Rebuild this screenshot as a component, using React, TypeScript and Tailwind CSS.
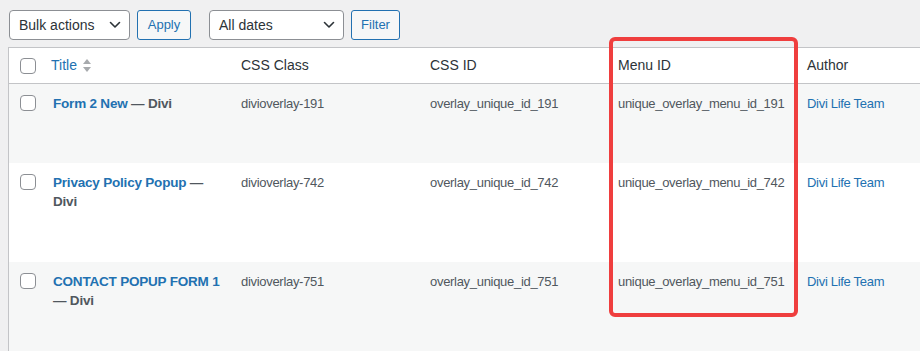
import React from "react";

// Row type
interface Overlay {
  titleLines: { link: string; state: string }[];
  cssClass: string;
  cssId: string;
  menuId: string;
  author: string;
  height: string;
  bg: string;
}

const ROWS: Overlay[] = [
  {
    titleLines: [{ link: "Form 2 New", state: " — Divi" }],
    cssClass: "divioverlay-191", cssId: "overlay_unique_id_191", menuId: "unique_overlay_menu_id_191",
    author: "Divi Life Team", height: "h-[79px]", bg: "bg-[#f6f7f7]",
  },
  {
    titleLines: [{ link: "Privacy Policy Popup", state: " —" }, { link: "", state: "Divi" }],
    cssClass: "divioverlay-742", cssId: "overlay_unique_id_742", menuId: "unique_overlay_menu_id_742",
    author: "Divi Life Team", height: "h-[99px]", bg: "bg-white",
  },
  {
    titleLines: [{ link: "CONTACT POPUP FORM 1", state: "" }, { link: "", state: "— Divi" }],
    cssClass: "divioverlay-751", cssId: "overlay_unique_id_751", menuId: "unique_overlay_menu_id_751",
    author: "Divi Life Team", height: "h-[100px]", bg: "bg-[#f6f7f7]",
  },
];

function Chevron() {
  return (
    <svg width="12" height="8" viewBox="0 0 12 8" fill="none">
      <polyline points="1.5,1.5 6,6 10.5,1.5" stroke="#2c3338" strokeWidth="1.6" strokeLinecap="round" strokeLinejoin="round" />
    </svg>
  );
}

function Checkbox() {
  return <div className="w-4 h-4 rounded-[4px] border border-[#8c8f94] bg-white" />;
}

export default function App() {
  return (
    <div className="relative w-[920px] h-[351px] overflow-hidden bg-[#f0f0f1] font-['Liberation_Sans',Arial,sans-serif] text-[#2c3338]">
      {/* Toolbar */}
      <div className="flex items-center pt-[10px] pl-[9px] h-[40px]">
        <div className="flex items-center justify-between w-[121px] h-[30px] pl-[9px] pr-[8px] bg-white border border-[#8c8f94] rounded-[4px] text-[14px]">
          <span>Bulk actions</span>
          <Chevron />
        </div>
        <button className="ml-[7px] w-[54px] h-[30px] border border-[#2271b1] rounded-[3px] bg-[#f6f7f7] text-[13px] text-[#2271b1]">Apply</button>
        <div className="ml-[18px] flex items-center justify-between w-[135px] h-[30px] pl-[9px] pr-[8px] bg-white border border-[#8c8f94] rounded-[4px] text-[14px]">
          <span>All dates</span>
          <Chevron />
        </div>
        <button className="ml-[7px] w-[49px] h-[30px] border border-[#2271b1] rounded-[3px] bg-[#f6f7f7] text-[13px] text-[#2271b1]">Filter</button>
      </div>

      {/* Table */}
      <div className="ml-[8px] mt-[7px] w-[1000px] border-l border-t border-[#c3c4c7] bg-white">
        {/* Header */}
        <div className="flex h-[36px] border-b border-[#c3c4c7] text-[14px] leading-[19px]">
          <div className="w-[32px] pl-[11px] pt-[10px] shrink-0"><Checkbox /></div>
          <div className="w-[190px] pl-[10px] pt-[8px] shrink-0 flex items-start gap-[5px] text-[#2271b1]">
            <span>Title</span>
            <svg width="10" height="16" viewBox="0 0 10 16" className="mt-[2px]">
              <polygon points="5,1 9,6 1,6" fill="#a7aaad" />
              <polygon points="1,9 9,9 5,14" fill="#a7aaad" />
            </svg>
          </div>
          <div className="w-[189px] pl-[10px] pt-[8px] shrink-0">CSS Class</div>
          <div className="w-[188px] pl-[10px] pt-[8px] shrink-0">CSS ID</div>
          <div className="w-[189px] pl-[10px] pt-[8px] shrink-0">Menu ID</div>
          <div className="pl-[10px] pt-[8px]">Author</div>
        </div>

        {/* Rows */}
        {ROWS.map((row) => (
          <div key={row.cssClass} className={`flex ${row.height} ${row.bg} text-[13px] leading-[19px] text-[#50575e] tracking-[-0.3px]`}>
            <div className="w-[32px] pl-[11px] pt-[11px] shrink-0"><Checkbox /></div>
            <div className="w-[190px] pl-[12px] pt-[10px] shrink-0 flex flex-col font-bold text-[13.5px] tracking-[-0.2px]">
              {row.titleLines.map((line, i) => (
                <div key={i} className="whitespace-nowrap">
                  {line.link && <span className="text-[#2271b1]">{line.link}</span>}
                  {line.state && <span className="text-[#50575e]">{line.state}</span>}
                </div>
              ))}
            </div>
            <div className="w-[189px] pl-[10px] pt-[10px] shrink-0">{row.cssClass}</div>
            <div className="w-[188px] pl-[10px] pt-[10px] shrink-0">{row.cssId}</div>
            <div className="w-[189px] pl-[10px] pt-[10px] shrink-0">{row.menuId}</div>
            <div className="pl-[10px] pt-[10px] text-[#2271b1]">{row.author}</div>
          </div>
        ))}
      </div>

      {/* Highlight annotation */}
      <div className="absolute left-[609px] top-[37px] w-[189px] h-[280px] border-4 border-[#ef3e3e] rounded-[6px]" />
    </div>
  );
}
